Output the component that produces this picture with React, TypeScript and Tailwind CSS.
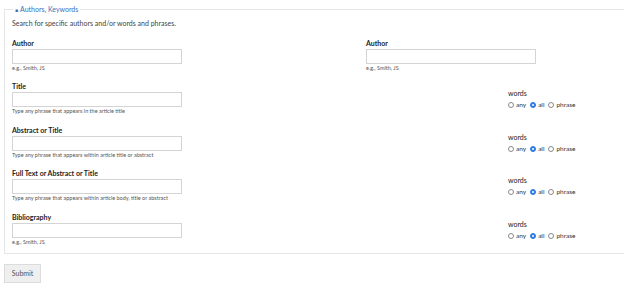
import { useState } from "react";

type Mode = "any" | "all" | "phrase";

const rows = [
  { label: "Title", help: "Type any phrase that appears in the article title" },
  { label: "Abstract or Title", help: "Type any phrase that appears within article title or abstract" },
  { label: "Full Text or Abstract or Title", help: "Type any phrase that appears within article body, title or abstract" },
  { label: "Bibliography", help: "e.g., Smith, JS" },
];

function Field({ label, help }: { label: string; help: string }) {
  return (
    <div className="w-[170px]">
      <div className="text-[7px] font-bold leading-[10px] text-[#222]">{label}</div>
      <input
        type="text"
        className="mt-[1px] block h-[15px] w-[170px] border border-[#d4d4d4] bg-white outline-none"
      />
      <div className="mt-[1px] text-[5.5px] leading-[7.5px] text-[#555]">{help}</div>
    </div>
  );
}

function Radio({ checked, label, onClick }: { checked: boolean; label: string; onClick: () => void }) {
  return (
    <button type="button" onClick={onClick} className="flex items-center gap-[2px]">
      <span
        className={
          checked
            ? "grid h-[6px] w-[6px] place-items-center rounded-full border border-[#2f7be5] bg-[#2f7be5]"
            : "h-[6px] w-[6px] rounded-full border border-[#8a8a8a] bg-white"
        }
      >
        {checked ? <span className="h-[2px] w-[2px] rounded-full bg-white" /> : null}
      </span>
      <span className="text-[6.5px] leading-[10px] text-[#333]">{label}</span>
    </button>
  );
}

function Words() {
  const [mode, setMode] = useState<Mode>("all");
  return (
    <div>
      <div className="text-[7px] leading-[10px] text-[#222]">words</div>
      <div className="mt-[2px] flex items-center gap-[4px]">
        <Radio checked={mode === "any"} label="any" onClick={() => setMode("any")} />
        <Radio checked={mode === "all"} label="all" onClick={() => setMode("all")} />
        <Radio checked={mode === "phrase"} label="phrase" onClick={() => setMode("phrase")} />
      </div>
    </div>
  );
}

export default function App() {
  return (
    <div className="h-[304px] w-[624px] overflow-hidden bg-white pt-[4px] font-['Lato','Open_Sans',sans-serif]">
      <fieldset className="ml-[4px] w-[621px] border border-[#e6e6e6] pb-[7px] pl-[7px]">
        <legend className="ml-[1px] px-[2px] text-[7px] leading-[10px] text-[#3a6fb8]">
          <span className="mr-[2px] text-[5px]">■</span>Authors, Keywords
        </legend>
        <p className="mt-[3px] text-[7px] leading-[10px] text-[#444]">
          Search for specific authors and/or words and phrases.
        </p>
        <div className="mt-[9.5px] grid grid-cols-[354px_142px_1fr] gap-y-[9px]">
          <Field label="Author" help="e.g., Smith, JS" />
          <div className="col-span-2">
            <Field label="Author" help="e.g., Smith, JS" />
          </div>
          {rows.map((row) => (
            <div key={row.label} className="contents">
              <Field label={row.label} help={row.help} />
              <div />
              <div className="pt-[7px]">
                <Words />
              </div>
            </div>
          ))}
        </div>
      </fieldset>
      <button
        type="button"
        className="ml-[4px] mt-[10px] h-[19px] w-[37px] border border-[#dcdcdc] bg-[#efefef] text-[7px] text-[#555]"
      >
        Submit
      </button>
    </div>
  );
}
